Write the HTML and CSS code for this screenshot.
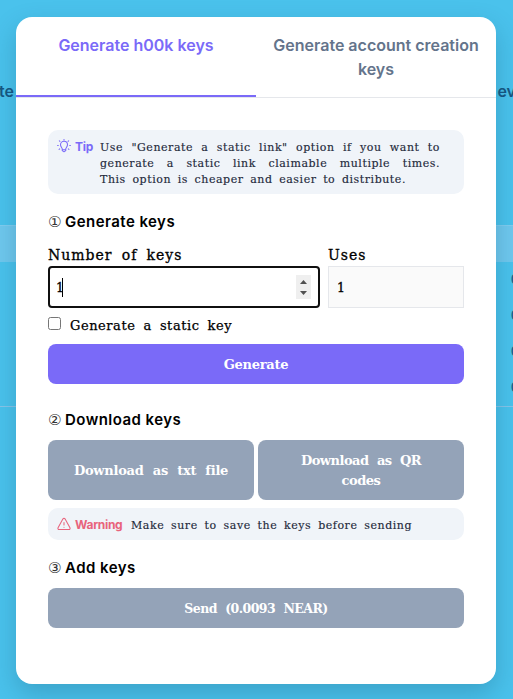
FILE: index.html
```html
<!DOCTYPE html>
<html lang="en">
<head>
<meta charset="utf-8">
<title>Generate keys</title>
<link rel="stylesheet" href="styles.css">
</head>
<body>
<div class="backdrop">
  <div class="back-head"><span>te</span><span>ev</span></div>
  <div class="back-band"></div>
  <div class="back-rows"><span>0</span><span>0</span><span>0</span><span>0</span></div>
</div>
<main class="modal">
  <nav class="tabs">
    <div class="tab active">Generate h00k keys</div>
    <div class="tab">Generate account creation<br>keys</div>
  </nav>
  <div class="content">
    <div class="note tip">
      <svg class="icon" viewBox="0 0 24 24"><path d="M9.500 18.500h5M9 17c0-2-3-3.500-3-7a6 6 0 0 1 12 0c0 3.500-3 5-3 7v3l-3 2-3-2zM12 .8v.7M1 11h1.200M21.800 11H23M4 3l1 1M20 3l-1 1M3.500 18l1-1M20.500 18l-1-1"/></svg>
      <strong class="note-label">Tip</strong>
      <div class="note-text"><div class="justify">Use "Generate a static link" option if you want to</div><div class="justify">generate a static link claimable multiple times.</div><div class="natural">This option is cheaper and easier to distribute.</div></div>
    </div>
    <h2><span class="num">①</span><span>Generate keys</span></h2>
    <div class="fields">
      <label class="slab label"><span>Number of keys</span><span class="field focus"><span>1</span><i class="caret"></i><span class="spin"><svg viewBox="0 0 15 24"><path d="M4 9l3.500-4L11 9zM4 16l3.500 4 3.500-4z"/></svg></span></span></label>
      <label class="slab label"><span>Uses</span><span class="field"><span>1</span></span></label>
    </div>
    <label class="check slab"><input type="checkbox"><span>Generate a static key</span></label>
    <button class="btn primary slab"><span>Generate</span></button>
    <h2><span class="num">②</span><span>Download keys</span></h2>
    <div class="downloads">
      <button class="btn slab"><span>Download as txt file</span></button>
      <button class="btn slab qr"><span>Download as QR<br>codes</span></button>
    </div>
    <div class="note warning">
      <svg class="icon" viewBox="0 0 24 24"><path d="M10.300 3.200L1.800 18.500a2 2 0 0 0 1.700 3h17a2 2 0 0 0 1.700-3L13.700 3.200a2 2 0 0 0-3.400 0zM12 9.500v4M12 17.500h.01"/></svg>
      <strong class="note-label">Warning</strong>
      <div class="note-text natural">Make sure to save the keys before sending</div>
    </div>
    <h2><span class="num">③</span><span>Add keys</span></h2>
    <button class="btn slab send"><span>Send (0.0093 NEAR)</span></button>
  </div>
</main>
</body>
</html>
```

FILE: styles.css
```css
* { box-sizing: border-box; }
body { margin: 0; width: 513px; height: 699px; overflow: hidden; background: #4ac2ec; font-family: Inter, sans-serif; color: #000; }
.backdrop { position: absolute; inset: 0; padding-top: 79px; overflow: hidden; color: #175782; }
.back-head { display: flex; justify-content: space-between; height: 146px; line-height: 24px; font-size: 16px; font-weight: 600; margin: 0 -3px 0 -1px; }
.back-band { height: 37px; background: #6fc8ee; border-top: 1px solid #80cdf0; }
.back-rows { height: 145px; border-bottom: 1px solid #86c5e9; display: flex; flex-direction: column; align-items: flex-end; margin-right: -6px; font: 13px/36px "DejaVu Serif", serif; }
.modal { position: relative; width: 480px; height: 667px; margin: 17px 0 0 16px; background: #fff; border-radius: 16px; box-shadow: 0 10px 24px rgba(15,70,100,.25); }
.tabs { display: flex; height: 81px; border-bottom: 1px solid #e5e7eb; }
.tab { width: 240px; height: 80px; padding-top: 16px; text-align: center; font-size: 16px; line-height: 24px; font-weight: 600; color: #64748b; white-space: nowrap; }
.tab.active { color: #7a6af8; border-bottom: 2px solid #7a6af8; }
.content { padding: 32px 32px 0; }
.slab, .note-text { font-family: "DejaVu Serif", serif; }
.note { display: flex; align-items: flex-start; background: #f0f4f9; border-radius: 10px; padding: 8px 9px; color: #7a6af8; white-space: nowrap; }
.icon { width: 14px; height: 14px; margin: 1px 4px 0 0; flex: none; fill: none; stroke: currentColor; stroke-width: 1.8; stroke-linecap: round; stroke-linejoin: round; }
.note-label { font-size: 12px; line-height: 17px; width: 25px; flex: none; font-weight: 700; letter-spacing: -.3px; }
.note-text { width: 340px; font-size: 11px; line-height: 16px; color: #1e293b; padding-top: 1.5px; -webkit-text-stroke: .15px; }
.tip .note-text { letter-spacing: .55px; }
.tip { height: 64px; }
.justify { text-align: justify; text-align-last: justify; }
.note .natural { letter-spacing: .55px; word-spacing: 2.6px; }
.warning .natural { letter-spacing: .55px; word-spacing: 2.8px; }
.warning { height: 32px; color: #e8637c; margin-top: 8px; }
.warning .note-label { width: 56px; }
h2 { display: flex; align-items: center; gap: 4px; margin: 16px 0 8px; height: 24px; font-size: 15px; line-height: 24px; font-weight: 600; letter-spacing: .45px; white-space: nowrap; }
.num { width: 13px; font: 15px/24px "DejaVu Sans", sans-serif; letter-spacing: 0; color: #333; }
.fields { display: grid; grid-template-columns: 272px 136px; gap: 8px; height: 66px; margin-top: 8px; }
.label { display: block; font-size: 14px; line-height: 26px; letter-spacing: 1px; word-spacing: 3.8px; white-space: nowrap; -webkit-text-stroke: .3px; }
.label > span:first-child { display: block; height: 24px; }
.field { display: flex; align-items: center; height: 42px; padding: 2px 8px 0; background: #fafafa; border: 1px solid #e5e7eb; font-size: 12.5px; letter-spacing: 0; }
.focus { background: #fff; border: 2px solid #101010; border-radius: 4px; padding: 0 7px 0 6px; }
.focus > span:first-child { padding-top: 2px; }
.caret { width: 1px; height: 19px; background: #000; margin-left: -2px; }
.spin { width: 15px; height: 24px; background: #efefef; margin-left: auto; }
.spin svg { display: block; fill: #505050; }
.check { display: flex; align-items: center; height: 20px; margin: 7px 0 9px; font-size: 13px; line-height: 20px; letter-spacing: .55px; word-spacing: 3.4px; white-space: nowrap; -webkit-text-stroke: .25px; }
.check input { width: 13px; height: 13px; margin: -3px 9px 0 0; }
.check span { padding-top: 1px; }
.btn { display: flex; align-items: center; justify-content: center; width: 100%; height: 40px; padding: 1px 0 0; border: 0; border-radius: 8px; background: #94a3b8; color: #fff; font-size: 13px; line-height: 20px; font-weight: 700; letter-spacing: -.25px; word-spacing: 4.9px; white-space: nowrap; }
.primary { background: #7a6af8; margin-bottom: 24px; }
.qr { letter-spacing: -.5px; word-spacing: 4.3px; }
.send { font-size: 12.5px; letter-spacing: -.55px; word-spacing: 4.5px; }
.downloads { display: grid; grid-template-columns: 1fr 1fr; gap: 4px; }
.downloads .btn { height: 60px; }
```
